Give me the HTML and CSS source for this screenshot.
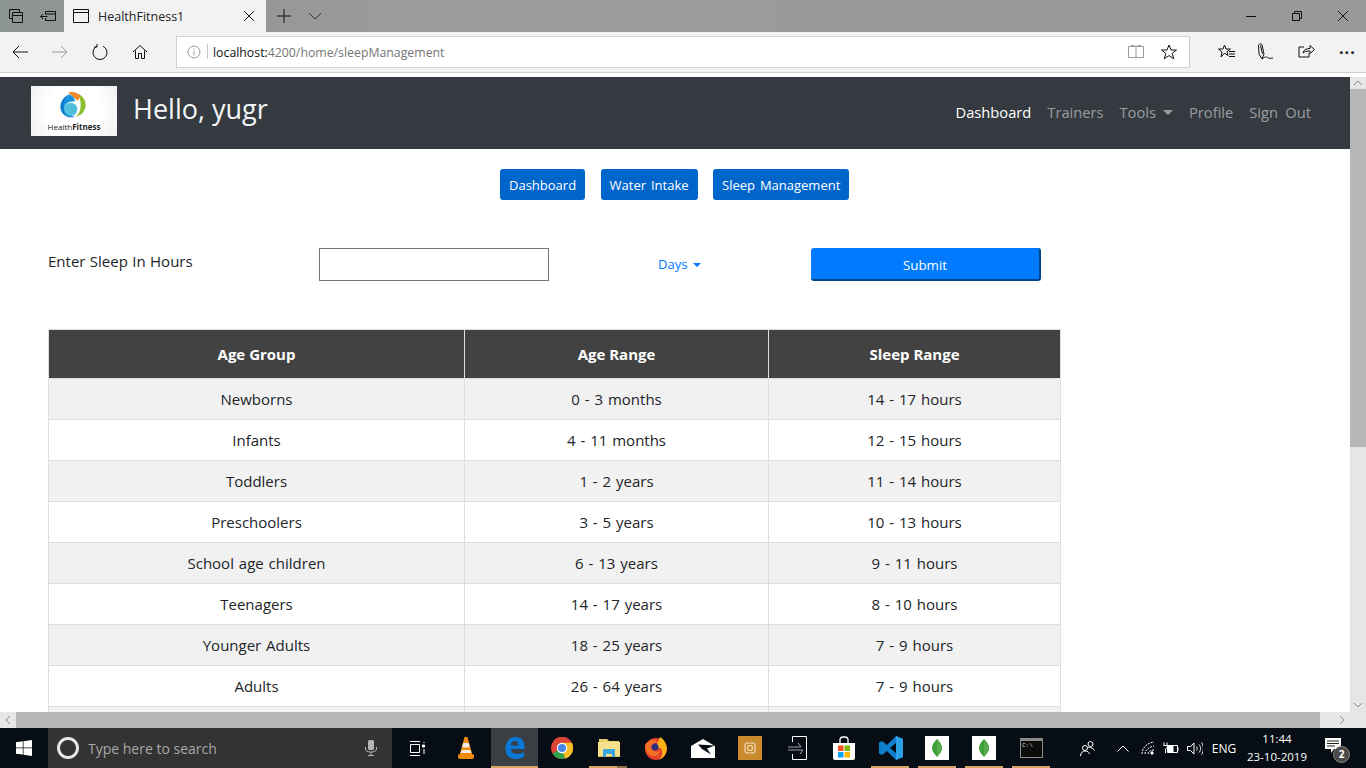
FILE: index.html
```html
<!DOCTYPE html>
<html lang="en">
<head>
<meta charset="utf-8">
<title>HealthFitness1</title>
<link rel="stylesheet" href="styles.css">
</head>
<body>
<div class="window">
  <div class="titlebar">
    <div class="tb-left">
      <svg class="ic" width="16" height="16" viewBox="0 0 16 16"><path d="M1.500 1.500h10v3M1.500 1.500v9h3M4.500 4.500h10v10h-10zM4.500 7.500h10" /></svg>
      <svg class="ic" width="16" height="16" viewBox="0 0 16 16"><path d="M5.500 3.500h10v9h-10v-2.500M5.500 3.500v3M5.500 6h10M0.500 8.500h7M3 6l-2.500 2.500L3 11" /></svg>
    </div>
    <div class="tab">
      <svg class="ic" width="16" height="14" viewBox="0 0 16 14"><path d="M.5.500h15v13h-15zM.5 3.500h15"/></svg>
      <span class="tab-title">HealthFitness1</span>
      <svg class="ic tab-x" width="12" height="12" viewBox="0 0 12 12"><path d="M1 1l10 10M11 1L1 11"/></svg>
    </div>
    <svg class="ic tb-plus" width="14" height="14" viewBox="0 0 14 14"><path d="M7 0v14M0 7h14"/></svg>
    <svg class="ic tb-chev" width="14" height="8" viewBox="0 0 14 8"><path d="M1 1l6 6 6-6"/></svg>
    <div class="win-controls">
      <svg class="ic" width="10" height="10" viewBox="0 0 10 10"><path d="M0 5.500h10"/></svg>
      <svg class="ic" width="10" height="10" viewBox="0 0 10 10"><path d="M.5 2.500h7v7h-7zM2.500 2.500v-2h7v7h-2"/></svg>
      <svg class="ic" width="10" height="10" viewBox="0 0 10 10"><path d="M0 0l10 10M10 0L0 10"/></svg>
    </div>
  </div>

  <div class="toolbar">
    <div class="nav-icons">
      <svg class="ic" width="16" height="14" viewBox="0 0 16 14"><path d="M16 7H1M7 1L1 7l6 6"/></svg>
      <svg class="ic dim" width="16" height="14" viewBox="0 0 16 14"><path d="M0 7h15M9 1l6 6-6 6"/></svg>
      <svg class="ic" width="16" height="16" viewBox="0 0 16 16"><path d="M5 2.200A7 7 0 1 0 11 2.200M5 0v3H2"/></svg>
      <svg class="ic" width="16" height="16" viewBox="0 0 16 16"><path d="M1 8l7-6.500L15 8M3.500 6.500v8h3v-5h3v5h3v-8"/></svg>
    </div>
    <div class="address">
      <svg class="ic dim info" width="14" height="14" viewBox="0 0 14 14"><circle cx="7" cy="7" r="6"/><path d="M7 6v4.500M7 3.500v1.200"/></svg>
      <span class="addr-sep"></span>
      <span class="url"><span class="host">localhost:</span>4200/home/sleepManagement</span>
      <svg class="ic dim book" width="16" height="14" viewBox="0 0 16 14"><path d="M8 1.500h7.500v11H8zM8 1.500H.5v11H8M3 .500h3.500M9.500 .500H13" /></svg>
      <svg class="ic star" width="16" height="16" viewBox="0 0 16 16"><path d="M8 1l2 5h5.500l-4.300 3.400 1.600 5.400L8 11.600l-4.800 3.200 1.600-5.400L.5 6H6z"/></svg>
    </div>
    <div class="tool-icons">
      <svg class="ic" width="17" height="16" viewBox="0 0 17 16"><path d="M6.500 1l1.500 4h4.500L9 7.800l1 3.700-3.500-2.300L3 13l1-5L.5 5H5zM11 7.500h6M11 10h6M11 12.500h6"/></svg>
      <svg class="ic" width="17" height="17" viewBox="0 0 17 17"><path d="M1.500 2C2.500.5 4.500.5 5 2l2 9-2 5-3-5zM3.500 2.500L5.500 11M5 16c2-1 3-2.500 4.500-2s2.500 2 6.500 1"/></svg>
      <svg class="ic" width="17" height="16" viewBox="0 0 17 16"><path d="M6 3H1v10h10V9M5 9c.5-3 3-4.500 7-4.500V1.500L16.500 5.500 12 9.500V7C9 7 6.500 7.500 5 9z"/></svg>
      <span class="dots">···</span>
    </div>
  </div>

  <div class="sep"></div>

  <div class="viewport">
    <div class="page">
      <nav class="navbar">
        <div class="logo">
          <svg width="30" height="29" viewBox="0 0 32 30">
            <path d="M21 3c7 3 10 12 5 19-2 3-5 4-8 5 5-4 7-12 3-24z" fill="#8cbf2f"/>
            <path d="M10 1c5-1 10 0 13 4l-3 5-5-4z" fill="#ee8a25"/>
            <path d="M11 3C4 6 0 13 2 20c2 6 9 9 15 7-6-1-12-6-11-13 1-5 3-8 5-11z" fill="#0d7fd0"/>
            <path d="M11 3c-4 4-6 9-5 13 2-4 6-6 11-5 0-4-2-6-6-8z" fill="#1b93dc"/>
            <circle cx="12.500" cy="19" r="7" fill="#4fc0dc"/>
          </svg>
          <span class="logo-text">Health<b>Fitness</b></span>
        </div>
        <h1 class="hello">Hello, yugr</h1>
        <ul class="nav-links">
          <li class="active">Dashboard</li>
          <li>Trainers</li>
          <li class="caret-item">Tools<span class="caret"></span></li>
          <li>Profile</li>
          <li>Sign Out</li>
        </ul>
      </nav>

      <div class="subnav">
        <a class="pill">Dashboard</a>
        <a class="pill">Water Intake</a>
        <a class="pill">Sleep Management</a>
      </div>

      <form class="entry">
        <label class="entry-label">Enter Sleep In Hours</label>
        <input class="entry-input" type="text">
        <span class="days">Days<span class="caret"></span></span>
        <button class="submit" type="button">Submit</button>
      </form>

      <table class="sleep">
        <colgroup><col class="c1"><col class="c2"><col class="c3"></colgroup>
        <thead>
          <tr><th>Age Group</th><th>Age Range</th><th>Sleep Range</th></tr>
        </thead>
        <tbody>
          <tr><td>Newborns</td><td>0 - 3 months</td><td>14 - 17 hours</td></tr>
          <tr><td>Infants</td><td>4 - 11 months</td><td>12 - 15 hours</td></tr>
          <tr><td>Toddlers</td><td>1 - 2 years</td><td>11 - 14 hours</td></tr>
          <tr><td>Preschoolers</td><td>3 - 5 years</td><td>10 - 13 hours</td></tr>
          <tr><td>School age children</td><td>6 - 13 years</td><td>9 - 11 hours</td></tr>
          <tr><td>Teenagers</td><td>14 - 17 years</td><td>8 - 10 hours</td></tr>
          <tr><td>Younger Adults</td><td>18 - 25 years</td><td>7 - 9 hours</td></tr>
          <tr><td>Adults</td><td>26 - 64 years</td><td>7 - 9 hours</td></tr>
          <tr><td></td><td></td><td></td></tr>
        </tbody>
      </table>
    </div>
    <div class="vscroll">
      <div class="arrow-cell top"><svg class="ic sb" width="10" height="6" viewBox="0 0 10 6"><path d="M1 5l4-4 4 4"/></svg></div>
      <div class="vthumb"></div>
      <div class="vtrack"></div>
      <div class="arrow-cell bottom"><svg class="ic sb" width="10" height="6" viewBox="0 0 10 6"><path d="M1 1l4 4 4-4"/></svg></div>
    </div>
  </div>

  <div class="hscroll">
    <div class="h-arrow"><svg class="ic sb" width="6" height="10" viewBox="0 0 6 10"><path d="M5 1L1 5l4 4"/></svg></div>
    <div class="hthumb"></div>
    <div class="h-end"><svg class="ic sb" width="6" height="10" viewBox="0 0 6 10"><path d="M1 1l4 4-4 4"/></svg></div>
  </div>

  <div class="taskbar">
    <div class="start">
      <svg width="16" height="16" viewBox="0 0 16 16"><path fill="#fff" d="M0 2.300l6.800-1v6.200H0zM7.500 1.200L16 0v7.500H7.500zM0 8.300h6.800v6.300L0 13.700zM7.500 8.300H16V16l-8.500-1.200z"/></svg>
    </div>
    <div class="search">
      <span class="cortana"></span>
      <span class="search-text">Type here to search</span>
      <svg class="mic" width="12" height="16" viewBox="0 0 12 16"><rect x="3" y="0" width="6" height="10" rx="1.500" fill="#b5b5b5"/><path d="M.5 7v2c0 2 2 3 5.500 3s5.500-1 5.500-3V7M6 12v3M3 15.500h6" stroke="#b5b5b5" fill="none"/></svg>
    </div>
    <div class="slot taskview">
      <svg width="16" height="15" viewBox="0 0 16 15" fill="none" stroke="#fff"><path d="M1 .500h10M1 14.500h10M1.500 3.500h9v8h-9zM15 1v1"/><path d="M13.500 4h2v2h-2z" fill="#fff"/><path d="M15 8v5"/></svg>
    </div>
    <div class="slot vlc">
      <svg width="16" height="22" viewBox="0 0 16 22"><path d="M6.500 0h3l5 18H1.500z" fill="#f28a12"/><path d="M5.300 6h5.400l1 4.500H4.200zM3.700 13h8.600l.8 3H2.900z" fill="#f1ede6"/><path d="M0 17.500h16V20c0 1-1 2-2 2H2c-1 0-2-1-2-2z" fill="#f08a10"/></svg>
    </div>
    <div class="slot on">
      <svg width="20" height="22" viewBox="1 0 19 22"><path d="M1 12C1 5 5 0 11 0c5 0 9 3 9 9v3H6.500c0 3 2.500 5 6 5 2.500 0 5-1 7-2v4.500c-2 1.500-5 2.500-8 2.500C5 22 1 18 1 12zM6.500 8.500H14C14 6 12.500 4 10 4S6.500 6 6.500 8.500z" fill="#0a78d6"/></svg>
    </div>
    <div class="slot">
      <svg width="22" height="22" viewBox="0 0 22 22"><circle cx="11" cy="11" r="11" fill="#dc4437"/><path d="M11 11L1.500 16.500A11 11 0 0 0 11 22c1 0 2-.1 3-.4z" fill="#2fa44f"/><path d="M11 5.500h9.700A11 11 0 0 1 14 21.600L11 11z" fill="#f6c026"/><path d="M11 5.500H20.700A11 11 0 0 0 2.800 3.600L6 11z" fill="#dc4437"/><circle cx="11" cy="11" r="5.200" fill="#fff"/><circle cx="11" cy="11" r="4" fill="#4a86e8"/></svg>
    </div>
    <div class="slot run folder">
      <svg width="22" height="20" viewBox="0 0 22 20"><path d="M1 1h8l2 2h10v2H1z" fill="#e6cf6e"/><path d="M0 4h22v15H0z" fill="#f6e08b"/><path d="M1 18h20v1H1z" fill="#d1b960"/><path d="M5 11h12v8h-3v-3H8v3H5z" fill="#3aa6dd"/></svg>
    </div>
    <div class="slot">
      <svg width="22" height="23" viewBox="0 0 22 23"><circle cx="11" cy="12" r="11" fill="#e5402c"/><path d="M15 0c5 3 7 8 6.800 12-.2 5-4 10-8 10.500 4-3 4-8 3-10-1-2-4-2-5-1-1-3 1-6 3.200-11.500z" fill="#fbb317"/><path d="M3 5c3-3 7-3 10 0-2 0-4 1-5 3 1 1 3 1 4 1 0 2-2 4-5 3 2 3 6 4 9 1-1 4-5 7-9 6-4-1-7-6-7-10 0-2 1-3 3-4z" fill="#f36f23"/><circle cx="10" cy="10" r="3.600" fill="#34307f"/></svg>
    </div>
    <div class="slot">
      <svg width="24" height="19" viewBox="0 0 24 19"><path d="M0 7L12 0l12 7v12H0z" fill="#fff"/><path d="M7 5.500L24 6.500 16 9.500l4 6L11 10z" fill="#060d14"/></svg>
    </div>
    <div class="slot">
      <svg width="24" height="24" viewBox="0 0 24 24"><rect width="24" height="24" fill="#c88a2d"/><rect x="7" y="7" width="10" height="10" rx="2.500" fill="none" stroke="#eedcbc" stroke-width="1.200"/><circle cx="12" cy="12" r="2.500" fill="none" stroke="#eedcbc" stroke-width="1.200"/></svg>
    </div>
    <div class="slot">
      <svg width="20" height="24" viewBox="0 0 20 24" fill="none" stroke="#fff"><path d="M5.500 6V.5h14v23h-14V18" /><path d="M1 11h13l-3-4M1 14h15l-3 4" stroke="#9ea3a8"/></svg>
    </div>
    <div class="slot">
      <svg width="24" height="24" viewBox="0 0 24 24"><path d="M1 7h22v15a2 2 0 0 1-2 2H3a2 2 0 0 1-2-2z" fill="#fff"/><path d="M8 7V3a3 3 0 0 1 3-2h2a3 3 0 0 1 3 2v4" fill="none" stroke="#fff" stroke-width="1.300"/><rect x="6" y="9.500" width="5.500" height="5.500" fill="#f25022"/><rect x="12.500" y="9.500" width="5.500" height="5.500" fill="#7fba00"/><rect x="6" y="16" width="5.500" height="5.500" fill="#00a4ef"/><rect x="12.500" y="16" width="5.500" height="5.500" fill="#ffb900"/></svg>
    </div>
    <div class="slot run">
      <svg width="24" height="24" viewBox="0 0 24 24"><path d="M17 0l7 3v18l-7 3-9-9-5 4-3-1.500V6.500L3 5l5 4zM17 7l-6 5 6 5z" fill="#0f7fcc"/><path d="M17 0l7 3v18l-7 3z" fill="#2ba1e6"/></svg>
    </div>
    <div class="slot run">
      <span class="mongo-tile"><svg width="10" height="18" viewBox="0 0 10 18"><path d="M5 0c3 3 5 6 5 9 0 4-3 6-5 9-2-3-5-5-5-9 0-3 2-6 5-9z" fill="#3fa037"/><path d="M5 0c3 3 5 6 5 9 0 4-3 6-5 9z" fill="#58aa50"/></svg></span>
    </div>
    <div class="slot run">
      <span class="mongo-tile"><svg width="10" height="18" viewBox="0 0 10 18"><path d="M5 0c3 3 5 6 5 9 0 4-3 6-5 9-2-3-5-5-5-9 0-3 2-6 5-9z" fill="#3fa037"/><path d="M5 0c3 3 5 6 5 9 0 4-3 6-5 9z" fill="#58aa50"/></svg></span>
    </div>
    <div class="slot run">
      <span class="cmd"><span class="cmd-text">C:\</span></span>
    </div>
    <div class="tray">
      <svg class="t-people tw" width="15" height="15" viewBox="0 0 15 15"><circle cx="5" cy="7" r="2.500"/><circle cx="10.500" cy="3" r="2.500"/><path d="M.5 15c0-3 2-5 4.500-5s4 1 4.500 3M8 6.500c1-.5 5 0 6.500 3"/></svg>
      <svg class="t-chev tw" width="12" height="7" viewBox="0 0 12 7"><path d="M.5 6.500L6 1l5.500 5.500"/></svg>
      <svg class="t-wifi tw" width="14" height="14" viewBox="0 0 14 14"><path d="M1 13C1 7 6 2 13 1M4 13c0-4 4-7 9-8M7 13c0-2 2-4 6-4" stroke-dasharray="2 1"/><circle cx="11" cy="12" r="1.200" fill="#fff"/></svg>
      <svg class="t-batt tw" width="16" height="12" viewBox="0 0 16 12"><path d="M4.500 3.500h10v7h-10zM15 5.500v3M1 .500v3M4 .500v3M.5 3.500h4v2l-2 1.500V11"/><path d="M5 4h5v6H5z" fill="#fff"/></svg>
      <svg class="t-vol tw" width="16" height="13" viewBox="0 0 16 13"><path d="M.5 4.500h3L7 1v11L3.500 8.500h-3zM9.500 4.500c1 1 1 3 0 4M12 2.500c2 2 2 6 0 8M14.500 .500c2.500 3 2.500 9 0 12"/></svg>
      <span class="t-lang">ENG</span>
      <div class="t-clock"><span>11:44</span><span>23-10-2019</span></div>
      <div class="t-notif">
        <svg width="16" height="16" viewBox="0 0 16 16"><path d="M0 0h16v11H9l-3 4v-4H0z" fill="#fff"/><path d="M2 3h12M2 5.500h12M2 8h8" stroke="#222"/></svg>
        <span class="badge">2</span>
      </div>
    </div>
  </div>
</div>
</body>
</html>
```

FILE: styles.css
```css
* { box-sizing: border-box; }
html, body { margin: 0; padding: 0; height: 100%; overflow: hidden; background: #fff; }
body { font-family: "Open Sans", "Noto Sans", sans-serif; }

.window { display: flex; flex-direction: column; width: 1366px; height: 768px; }
.ic { fill: none; stroke: #111; stroke-width: 1; flex: none; display: block; }
.ic.dim { stroke: #9a9a9a; }

/* title bar */
.titlebar { height: 32px; flex: none; display: flex; align-items: center; background: linear-gradient(90deg, #8d9494, #9b9b9b 30%, #999 100%); }
.tb-left { width: 64px; display: flex; align-items: center; gap: 16px; padding-left: 8px; }
.tab { width: 202px; height: 32px; background: #f2f2f2; display: flex; align-items: center; padding-left: 9px; }
.tab-title { font-size: 12.500px; color: #222; margin-left: 9px; flex: 1; }
.tab-x { margin-right: 11px; }
.tb-plus { margin-left: 11px; }
.tb-chev { margin-left: 17px; stroke: #333; }
.win-controls { margin-left: auto; display: flex; gap: 36px; align-items: center; padding-right: 18px; }

/* toolbar */
.toolbar { height: 41px; flex: none; background: #f2f2f2; border-bottom: 1px solid #cfcfcf; display: flex; align-items: center; padding-bottom: 1px; }
.nav-icons { width: 176px; display: flex; align-items: center; gap: 24px; padding-left: 12px; }
.address { width: 1014px; height: 32px; background: #fff; border: 1px solid #d2d2d2; display: flex; align-items: center; }
.info { margin-left: 10px; }
.addr-sep { width: 1px; height: 15px; background: #c8c8c8; margin-left: 6px; }
.url { font-size: 12.300px; color: #767676; margin-left: 5px; padding-top: 1px; flex: 1; }
.host { color: #111; }
.book { margin-right: 17px; }
.star { margin-right: 12px; }
.tool-icons { flex: 1; display: flex; align-items: center; justify-content: flex-start; gap: 22px; padding-left: 28px; }
.tool-icons .ic:nth-child(3) { margin-left: 2px; }
.dots { font-size: 16px; font-weight: 700; color: #222; letter-spacing: 1px; margin-left: 2px; line-height: 16px; }

.sep { height: 4px; flex: none; background: #fff; }

/* viewport */
.viewport { height: 635px; flex: none; display: flex; }
.page { width: 1350px; height: 635px; overflow: hidden; background: #fff; color: #212529; }
.vscroll { width: 16px; display: flex; flex-direction: column; background: #e6e6e6; }
.arrow-cell { display: flex; align-items: center; justify-content: center; }
.arrow-cell.top { height: 12px; }
.arrow-cell.bottom { height: 15px; }
.sb { stroke: #8a8a8a; }
.vthumb { height: 358px; background: #b6b6b6; }
.vtrack { flex: 1; }

.hscroll { height: 16px; flex: none; display: flex; background: #e6e6e6; }
.h-arrow { width: 16px; display: flex; align-items: center; justify-content: center; }
.hthumb { width: 1304px; background: #b6b6b6; }
.h-end { flex: 1; display: flex; align-items: center; justify-content: flex-end; padding-right: 21px; }

/* site nav */
.navbar { height: 72px; background: #343a40; display: flex; align-items: center; padding: 0 0 4px 31px; }
.logo { width: 86px; height: 50px; background: radial-gradient(circle, #fff 55%, #f0f0f0); display: flex; flex-direction: column; align-items: center; padding-top: 5px; }
.logo-text { font-size: 8px; line-height: 10px; color: #222; margin-top: 2px; }
.hello { font-size: 27px; font-weight: 400; color: #f3f5f7; margin: 0 0 4px 16px; line-height: 40px; }
.nav-links { list-style: none; margin: 2px 39px 0 auto; padding: 0; display: flex; gap: 16px; font-size: 14.700px; word-spacing: 3.500px; color: rgba(255,255,255,.5); }
.nav-links .active { color: #fff; }
.caret { display: inline-block; margin-left: 7px; vertical-align: 3px; border-top: 5px solid currentColor; border-left: 5px solid transparent; border-right: 5px solid transparent; }

/* page buttons */
.subnav { display: flex; justify-content: flex-start; gap: 15.500px; padding: 20px 0 0 500px; }
.pill { height: 31px; padding: 1px 9px 0; background: #0066cc; color: #fff; font-size: 13px; word-spacing: 1.500px; line-height: 30px; border-radius: 3px; }

.entry { display: flex; align-items: center; padding-left: 48px; margin-top: 48px; height: 33px; }
.entry-label { width: 271px; font-size: 15px; word-spacing: .5px; color: #212529; position: relative; top: -4px; }
.entry-input { width: 230px; height: 33px; border: 1px solid #767676; background: #fff; padding: 0; margin: 0; }
.days { margin-left: 109px; width: 153px; color: #007bff; font-size: 13px; padding-bottom: 1px; }
.days .caret { margin-left: 6px; border-top-width: 4px; border-left-width: 4.500px; border-right-width: 4.500px; vertical-align: 2px; }
.submit { width: 230px; height: 33px; background: #007bff; color: #fff; border: 0; border-bottom: 2px solid #00458f; border-right: 2px solid #00458f; border-radius: 3px; font: 13.300px "Open Sans", sans-serif; padding: 3px 0 0; }

/* table */
.sleep { margin: 48px 0 0 48px; width: 1012px; border-collapse: collapse; table-layout: fixed; font-size: 15px; word-spacing: 1px; }
.c1 { width: 416px; }
.c2 { width: 304px; }
.c3 { width: 292px; }
.sleep th { height: 49px; background: #424242; color: #fff; font-weight: 700; word-spacing: 0; border: 1px solid #dedede; text-align: center; padding: 0 0 1px; }
.sleep td { height: 41px; border: 1px solid #dedede; text-align: center; padding: 0 0 1px; color: #212529; }
.sleep tbody tr:nth-child(odd) td { background: #f1f1f1; }

/* taskbar */
.taskbar { height: 40px; flex: none; background: #060d14; display: flex; align-items: center; }
.start { width: 48px; height: 40px; display: flex; align-items: center; justify-content: center; }
.search { width: 344px; height: 40px; background: #333; display: flex; align-items: center; padding-left: 9px; }
.cortana { width: 22px; height: 22px; border: 3px solid #e6e6e6; border-radius: 50%; }
.search-text { font-size: 14px; color: #a8a8a8; margin-left: 9px; flex: 1; }
.mic { margin-right: 15px; }
.slot { width: 47px; height: 40px; display: flex; align-items: center; justify-content: center; flex: none; position: relative; }
.taskview { width: 52px; padding-right: 2px; }
.vlc { padding-right: 4px; }
.slot.on { background: #3a3f44; }
.slot.on::after, .slot.run::after { content: ""; position: absolute; left: 4px; right: 5px; bottom: 0; height: 2px; background: #d8a368; }
.slot.on::after { left: 0; right: 0; }
.slot.folder::after { background: linear-gradient(90deg, #d8a368 75%, #8c7048 75%); }
.mongo-tile { width: 24px; height: 24px; background: #fff; display: flex; align-items: center; justify-content: center; margin-right: 1px; }
.cmd { width: 23px; height: 20px; background: #0c0c0c; border: 1px solid #8b8b8b; border-top-width: 3px; display: block; }
.cmd-text { display: block; color: #ddd; font: 6px/9px "Liberation Mono", monospace; padding-left: 1px; }
.tray { flex: 1; display: flex; align-items: center; height: 40px; color: #fff; padding-left: 16px; }
.tray .tw { fill: none; stroke: #fff; stroke-width: 1; display: block; flex: none; }
.t-people { margin: 0 8.500px; }
.t-chev { margin: 0 12px 0 14px; }
.t-wifi { margin: 0; }
.t-batt { margin: 0 8px; }
.t-vol { margin: 0; }
.t-lang { width: 42px; text-align: center; font-size: 12px; }
.t-clock { width: 64px; display: flex; flex-direction: column; align-items: center; font-size: 11.500px; line-height: 18px; }
.t-notif { width: 57px; height: 40px; position: relative; display: flex; align-items: center; padding: 0 0 4px 16px; }
.badge { position: absolute; left: 24px; top: 18px; width: 17px; height: 17px; border-radius: 50%; background: #4a4a4a; border: 1px solid #888; color: #fff; font-size: 10px; font-weight: 700; line-height: 15px; text-align: center; }
```
